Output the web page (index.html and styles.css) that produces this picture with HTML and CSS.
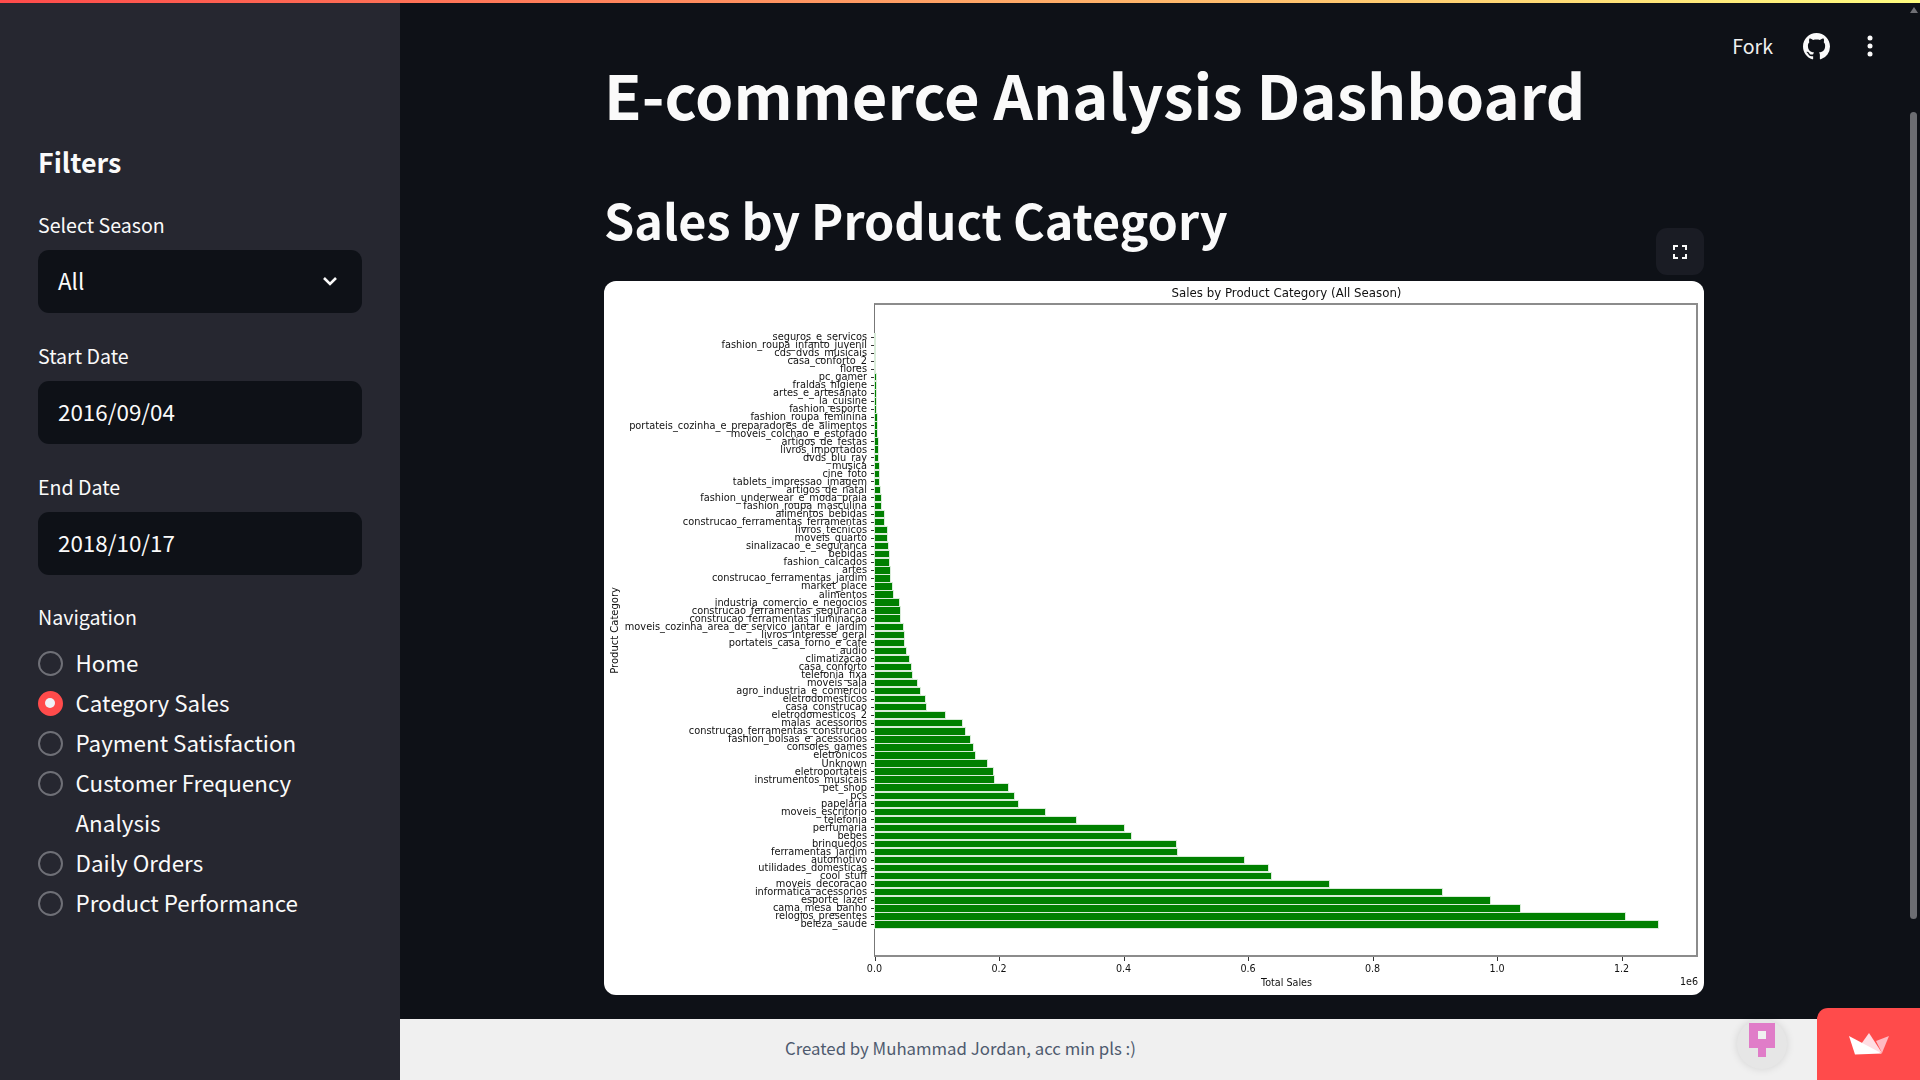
FILE: index.html
```html
<!DOCTYPE html>
<html lang="en">
<head>
<meta charset="utf-8">
<title>E-commerce Analysis Dashboard</title>
<link rel="stylesheet" href="styles.css">
</head>
<body>
<div class="decoration"></div>
<div class="app">
  <aside class="sidebar">
    <h2 class="side-title">Filters</h2>
    <div class="field">
      <div class="field-label">Select Season</div>
      <div class="control"><span>All</span>
        <svg class="chevron" viewBox="0 0 16 10"><path d="M2 2l6 6 6-6" fill="none" stroke="#fafafa" stroke-width="2.6"/></svg>
      </div>
    </div>
    <div class="field">
      <div class="field-label">Start Date</div>
      <div class="control"><span>2016/09/04</span></div>
    </div>
    <div class="field">
      <div class="field-label">End Date</div>
      <div class="control"><span>2018/10/17</span></div>
    </div>
    <div class="field nav-field">
      <div class="field-label">Navigation</div>
      <ul class="radios">
        <li class="radio"><i class="dot"></i><span>Home</span></li>
        <li class="radio on"><i class="dot"></i><span>Category Sales</span></li>
        <li class="radio"><i class="dot"></i><span>Payment Satisfaction</span></li>
        <li class="radio"><i class="dot"></i><span>Customer Frequency<br>Analysis</span></li>
        <li class="radio"><i class="dot"></i><span>Daily Orders</span></li>
        <li class="radio"><i class="dot"></i><span>Product Performance</span></li>
      </ul>
    </div>
  </aside>
  <div class="main">
    <main class="content">
      <h1 class="title">E-commerce Analysis Dashboard</h1>
      <h2 class="subtitle">Sales by Product Category</h2>
      <section class="figure">
        <button class="expand" type="button" aria-label="Fullscreen">
          <svg viewBox="0 0 14 14" width="14" height="14"><path d="M1 5V1h4M9 1h4v4M13 9v4H9M5 13H1V9" fill="none" stroke="#fafafa" stroke-width="2"/></svg>
        </button>
        <div class="plot">
          <div class="fig-title">Sales by Product Category (All Season)</div>
          <div class="fig-body">
            <div class="ylabel">Product Category</div>
            <div class="axes">
              <div class="rows">
                <div class="row"><span class="cat">seguros_e_servicos</span><i class="tick"></i><i class="bar" style="width:.2px"></i></div>
                <div class="row"><span class="cat">fashion_roupa_infanto_juvenil</span><i class="tick"></i><i class="bar" style="width:.2px"></i></div>
                <div class="row"><span class="cat">cds_dvds_musicais</span><i class="tick"></i><i class="bar" style="width:.3px"></i></div>
                <div class="row"><span class="cat">casa_conforto_2</span><i class="tick"></i><i class="bar" style="width:.4px"></i></div>
                <div class="row"><span class="cat">flores</span><i class="tick"></i><i class="bar" style="width:.7px"></i></div>
                <div class="row"><span class="cat">pc_gamer</span><i class="tick"></i><i class="bar" style="width:1px"></i></div>
                <div class="row"><span class="cat">fraldas_higiene</span><i class="tick"></i><i class="bar" style="width:1px"></i></div>
                <div class="row"><span class="cat">artes_e_artesanato</span><i class="tick"></i><i class="bar" style="width:1px"></i></div>
                <div class="row"><span class="cat">la_cuisine</span><i class="tick"></i><i class="bar" style="width:1.3px"></i></div>
                <div class="row"><span class="cat">fashion_esporte</span><i class="tick"></i><i class="bar" style="width:1.7px"></i></div>
                <div class="row"><span class="cat">fashion_roupa_feminina</span><i class="tick"></i><i class="bar" style="width:2px"></i></div>
                <div class="row"><span class="cat">portateis_cozinha_e_preparadores_de_alimentos</span><i class="tick"></i><i class="bar" style="width:2.7px"></i></div>
                <div class="row"><span class="cat">moveis_colchao_e_estofado</span><i class="tick"></i><i class="bar" style="width:2.7px"></i></div>
                <div class="row"><span class="cat">artigos_de_festas</span><i class="tick"></i><i class="bar" style="width:3px"></i></div>
                <div class="row"><span class="cat">livros_importados</span><i class="tick"></i><i class="bar" style="width:3px"></i></div>
                <div class="row"><span class="cat">dvds_blu_ray</span><i class="tick"></i><i class="bar" style="width:3.7px"></i></div>
                <div class="row"><span class="cat">musica</span><i class="tick"></i><i class="bar" style="width:4px"></i></div>
                <div class="row"><span class="cat">cine_foto</span><i class="tick"></i><i class="bar" style="width:4.3px"></i></div>
                <div class="row"><span class="cat">tablets_impressao_imagem</span><i class="tick"></i><i class="bar" style="width:4.7px"></i></div>
                <div class="row"><span class="cat">artigos_de_natal</span><i class="tick"></i><i class="bar" style="width:5.7px"></i></div>
                <div class="row"><span class="cat">fashion_underwear_e_moda_praia</span><i class="tick"></i><i class="bar" style="width:6px"></i></div>
                <div class="row"><span class="cat">fashion_roupa_masculina</span><i class="tick"></i><i class="bar" style="width:6.7px"></i></div>
                <div class="row"><span class="cat">alimentos_bebidas</span><i class="tick"></i><i class="bar" style="width:9.3px"></i></div>
                <div class="row"><span class="cat">construcao_ferramentas_ferramentas</span><i class="tick"></i><i class="bar" style="width:9.7px"></i></div>
                <div class="row"><span class="cat">livros_tecnicos</span><i class="tick"></i><i class="bar" style="width:12px"></i></div>
                <div class="row"><span class="cat">moveis_quarto</span><i class="tick"></i><i class="bar" style="width:12.3px"></i></div>
                <div class="row"><span class="cat">sinalizacao_e_seguranca</span><i class="tick"></i><i class="bar" style="width:13.3px"></i></div>
                <div class="row"><span class="cat">bebidas</span><i class="tick"></i><i class="bar" style="width:14px"></i></div>
                <div class="row"><span class="cat">fashion_calcados</span><i class="tick"></i><i class="bar" style="width:14.7px"></i></div>
                <div class="row"><span class="cat">artes</span><i class="tick"></i><i class="bar" style="width:15px"></i></div>
                <div class="row"><span class="cat">construcao_ferramentas_jardim</span><i class="tick"></i><i class="bar" style="width:15.7px"></i></div>
                <div class="row"><span class="cat">market_place</span><i class="tick"></i><i class="bar" style="width:17.7px"></i></div>
                <div class="row"><span class="cat">alimentos</span><i class="tick"></i><i class="bar" style="width:18.3px"></i></div>
                <div class="row"><span class="cat">industria_comercio_e_negocios</span><i class="tick"></i><i class="bar" style="width:24.7px"></i></div>
                <div class="row"><span class="cat">construcao_ferramentas_seguranca</span><i class="tick"></i><i class="bar" style="width:25px"></i></div>
                <div class="row"><span class="cat">construcao_ferramentas_iluminacao</span><i class="tick"></i><i class="bar" style="width:25.3px"></i></div>
                <div class="row"><span class="cat">moveis_cozinha_area_de_servico_jantar_e_jardim</span><i class="tick"></i><i class="bar" style="width:28.3px"></i></div>
                <div class="row"><span class="cat">livros_interesse_geral</span><i class="tick"></i><i class="bar" style="width:29px"></i></div>
                <div class="row"><span class="cat">portateis_casa_forno_e_cafe</span><i class="tick"></i><i class="bar" style="width:29.3px"></i></div>
                <div class="row"><span class="cat">audio</span><i class="tick"></i><i class="bar" style="width:31.5px"></i></div>
                <div class="row"><span class="cat">climatizacao</span><i class="tick"></i><i class="bar" style="width:34px"></i></div>
                <div class="row"><span class="cat">casa_conforto</span><i class="tick"></i><i class="bar" style="width:36.2px"></i></div>
                <div class="row"><span class="cat">telefonia_fixa</span><i class="tick"></i><i class="bar" style="width:37.3px"></i></div>
                <div class="row"><span class="cat">moveis_sala</span><i class="tick"></i><i class="bar" style="width:42.8px"></i></div>
                <div class="row"><span class="cat">agro_industria_e_comercio</span><i class="tick"></i><i class="bar" style="width:45px"></i></div>
                <div class="row"><span class="cat">eletrodomesticos</span><i class="tick"></i><i class="bar" style="width:50px"></i></div>
                <div class="row"><span class="cat">casa_construcao</span><i class="tick"></i><i class="bar" style="width:51.6px"></i></div>
                <div class="row"><span class="cat">eletrodomesticos_2</span><i class="tick"></i><i class="bar" style="width:70.8px"></i></div>
                <div class="row"><span class="cat">malas_acessorios</span><i class="tick"></i><i class="bar" style="width:87.8px"></i></div>
                <div class="row"><span class="cat">construcao_ferramentas_construcao</span><i class="tick"></i><i class="bar" style="width:90px"></i></div>
                <div class="row"><span class="cat">fashion_bolsas_e_acessorios</span><i class="tick"></i><i class="bar" style="width:95.4px"></i></div>
                <div class="row"><span class="cat">consoles_games</span><i class="tick"></i><i class="bar" style="width:98.2px"></i></div>
                <div class="row"><span class="cat">eletronicos</span><i class="tick"></i><i class="bar" style="width:100.4px"></i></div>
                <div class="row"><span class="cat">Unknown</span><i class="tick"></i><i class="bar" style="width:112.5px"></i></div>
                <div class="row"><span class="cat">eletroportateis</span><i class="tick"></i><i class="bar" style="width:118.5px"></i></div>
                <div class="row"><span class="cat">instrumentos_musicais</span><i class="tick"></i><i class="bar" style="width:119px"></i></div>
                <div class="row"><span class="cat">pet_shop</span><i class="tick"></i><i class="bar" style="width:133.8px"></i></div>
                <div class="row"><span class="cat">pcs</span><i class="tick"></i><i class="bar" style="width:139.3px"></i></div>
                <div class="row"><span class="cat">papelaria</span><i class="tick"></i><i class="bar" style="width:143.7px"></i></div>
                <div class="row"><span class="cat">moveis_escritorio</span><i class="tick"></i><i class="bar" style="width:170.6px"></i></div>
                <div class="row"><span class="cat">telefonia</span><i class="tick"></i><i class="bar" style="width:201.9px"></i></div>
                <div class="row"><span class="cat">perfumaria</span><i class="tick"></i><i class="bar" style="width:249px"></i></div>
                <div class="row"><span class="cat">bebes</span><i class="tick"></i><i class="bar" style="width:256.2px"></i></div>
                <div class="row"><span class="cat">brinquedos</span><i class="tick"></i><i class="bar" style="width:301.1px"></i></div>
                <div class="row"><span class="cat">ferramentas_jardim</span><i class="tick"></i><i class="bar" style="width:302.2px"></i></div>
                <div class="row"><span class="cat">automotivo</span><i class="tick"></i><i class="bar" style="width:369.2px"></i></div>
                <div class="row"><span class="cat">utilidades_domesticas</span><i class="tick"></i><i class="bar" style="width:393.9px"></i></div>
                <div class="row"><span class="cat">cool_stuff</span><i class="tick"></i><i class="bar" style="width:396px"></i></div>
                <div class="row"><span class="cat">moveis_decoracao</span><i class="tick"></i><i class="bar" style="width:454.7px"></i></div>
                <div class="row"><span class="cat">informatica_acessorios</span><i class="tick"></i><i class="bar" style="width:567.7px"></i></div>
                <div class="row"><span class="cat">esporte_lazer</span><i class="tick"></i><i class="bar" style="width:615.5px"></i></div>
                <div class="row"><span class="cat">cama_mesa_banho</span><i class="tick"></i><i class="bar" style="width:645.6px"></i></div>
                <div class="row"><span class="cat">relogios_presentes</span><i class="tick"></i><i class="bar" style="width:750.4px"></i></div>
                <div class="row"><span class="cat">beleza_saude</span><i class="tick"></i><i class="bar" style="width:783.9px"></i></div>
              </div>
            </div>
          </div>
          <div class="xticks">
            <div class="xtick"><span>0.0</span></div>
            <div class="xtick"><span>0.2</span></div>
            <div class="xtick"><span>0.4</span></div>
            <div class="xtick"><span>0.6</span></div>
            <div class="xtick"><span>0.8</span></div>
            <div class="xtick"><span>1.0</span></div>
            <div class="xtick"><span>1.2</span></div>
          </div>
          <div class="xfoot"><span class="xlabel">Total Sales</span><span class="offset">1e6</span></div>
        </div>
      </section>
    </main>
    <footer class="footer">Created by Muhammad Jordan, acc min pls :)</footer>
  </div>
</div>

<div class="toolbar">
  <span class="fork">Fork</span>
  <svg class="github" viewBox="0 0 16 16" width="27" height="27"><path fill="#fafafa" d="M8 0C3.58 0 0 3.58 0 8c0 3.54 2.29 6.53 5.47 7.59.4.07.55-.17.55-.38 0-.19-.01-.82-.01-1.49-2.01.37-2.53-.49-2.69-.94-.09-.23-.48-.94-.82-1.13-.28-.15-.68-.52-.01-.53.63-.01 1.08.58 1.23.82.72 1.21 1.87.87 2.33.66.07-.52.28-.87.51-1.07-1.78-.2-3.64-.89-3.64-3.95 0-.87.31-1.59.82-2.15-.08-.2-.36-1.02.08-2.12 0 0 .67-.21 2.2.82.64-.18 1.32-.27 2-.27.68 0 1.36.09 2 .27 1.53-1.04 2.2-.82 2.2-.82.44 1.1.16 1.92.08 2.12.51.56.82 1.27.82 2.15 0 3.07-1.87 3.75-3.65 3.95.29.25.54.73.54 1.48 0 1.07-.01 1.93-.01 2.2 0 .21.15.46.55.38A8.013 8.013 0 0016 8c0-4.42-3.58-8-8-8z"/></svg>
  <svg class="kebab" viewBox="0 0 6 22" width="6" height="22"><circle cx="3" cy="3" r="2.5" fill="#fafafa"/><circle cx="3" cy="11" r="2.5" fill="#fafafa"/><circle cx="3" cy="19" r="2.5" fill="#fafafa"/></svg>
</div>

<div class="scrollbar"><i class="arrow"></i><i class="thumb"></i></div>

<div class="avatar">
  <svg viewBox="0 0 26 34" width="26" height="34"><path fill="#e07cc8" d="M0 0h26v25h-9v9H9v-9H0z"/><path fill="#f0f0f0" d="M9 8h8v8H9z"/></svg>
</div>

<div class="badge">
  <svg viewBox="0 0 40 22" width="40" height="22">
    <path fill="#ffb9c2" d="M40 3L33 20 27 8z"/>
    <path fill="#ffdde3" d="M20 0L33 20 10 14z"/>
    <path fill="#ffffff" d="M0 3L33 20.5 6 21.5z"/>
  </svg>
</div>
</body>
</html>
```

FILE: styles.css
```css
* { box-sizing: border-box; }
html, body { margin: 0; padding: 0; height: 100%; overflow: hidden; }
body {
  display: flex;
  flex-direction: column;
  background: #0e1117;
  color: #fafafa;
  font-family: "Noto Sans CJK JP", "Noto Sans", sans-serif;
}
.decoration {
  height: 3px;
  flex: none;
  background: linear-gradient(90deg, #ff4b4b, #fffd80);
}
.app { flex: 1; display: flex; min-height: 0; }

/* Sidebar */
.sidebar {
  width: 400px;
  flex: none;
  background: #262730;
  padding: 139px 38px 0;
}
.side-title {
  margin: 0 0 30px;
  font-size: 26.8px;
  line-height: 40px;
  font-weight: 600;
}
.field { margin-bottom: 30px; }
.field-label {
  margin: 0 0 12px;
  font-size: 19.6px;
  line-height: 26px;
}
.control {
  height: 63px;
  border-radius: 11px;
  background: #0e1117;
  display: flex;
  align-items: center;
  justify-content: space-between;
  padding: 0 24px 4px 20px;
  font-size: 22.4px;
}
.chevron { width: 16px; height: 10px; margin-top: 2px; }
.nav-field { margin-top: -1px; }
.radios { list-style: none; margin: 13px 0 0; padding: 0; }
.radio {
  display: flex;
  align-items: flex-start;
  gap: 13px;
  font-size: 22.4px;
  line-height: 40px;
}
.radio span { margin: -1.5px 0 1.5px -.5px; }
.dot {
  flex: none;
  width: 25px;
  height: 25px;
  margin-top: 8px;
  border: 2px solid #6f7077;
  border-radius: 50%;
}
.radio.on .dot {
  background: #ff4b4b;
  border: 7.5px solid #ff4b4b;
}
.radio.on .dot::after {
  content: "";
  display: block;
  width: 10px;
  height: 10px;
  border-radius: 50%;
  background: #f0f2f6;
}

/* Main */
.main { flex: 1; min-width: 0; display: flex; flex-direction: column; }
.content { flex: 1; min-height: 0; padding: 43px 0 0 204px; overflow: hidden; }
.title {
  margin: 0;
  font-size: 61.4px;
  line-height: 96px;
  font-weight: 700;
}
.subtitle {
  margin: 41px 0 26px;
  font-size: 48.5px;
  line-height: 72px;
  font-weight: 600;
}
.figure {
  position: relative;
  width: 1100px;
  height: 714px;
  background: #fff;
  border-radius: 12px;
  color: #111;
  font-family: "DejaVu Sans", sans-serif;
}
.expand {
  position: absolute;
  top: -53px;
  right: 0;
  width: 48px;
  height: 47px;
  padding: 0;
  border: 0;
  border-radius: 11px;
  background: #1a1c24;
  display: flex;
  align-items: center;
  justify-content: center;
}
.plot {
  height: 100%;
  filter: blur(.4px);
}
.fig-title {
  margin-left: 271px;
  width: 823px;
  height: 22px;
  padding-top: 5px;
  text-align: center;
  font-size: 11.8px;
  line-height: 14px;
}
.fig-body { display: flex; height: 654px; }
.ylabel {
  flex: none;
  width: 12px;
  margin: 0 253px 0 5px;
  align-self: center;
  writing-mode: vertical-rl;
  transform: rotate(180deg);
  text-align: center;
  font-size: 10px;
  line-height: 12px;
}
.axes {
  width: 824px;
  flex: none;
  border: 2px solid #8c8c8c;
  border-left: 1px solid #777;
}
.rows { margin: 28px 0 0 -270px; }
.row {
  display: flex;
  align-items: center;
  height: 8.06px;
  font-size: 9.8px;
  line-height: 8px;
}
.cat {
  flex: none;
  width: 266px;
  padding-right: 4px;
  text-align: right;
  white-space: nowrap;
}
.tick { flex: none; width: 3.5px; height: 1px; background: #333; }
.bar { height: 6.4px; background: #008000; outline: .5px solid #d8ecd8; }
.xticks { display: flex; margin-left: 270.5px; height: 20px; }
.xtick {
  flex: none;
  width: 124.53px;
  font-size: 9.6px;
  line-height: 12px;
}
.xtick::before {
  content: "";
  display: block;
  width: 1px;
  height: 4px;
  background: #333;
  margin-bottom: 2px;
}
.xtick span { display: inline-block; transform: translateX(-50%); }
.xfoot {
  position: relative;
  margin-left: 271px;
  width: 823px;
  display: flex;
  justify-content: center;
  font-size: 9.6px;
  line-height: 12px;
}
.offset { position: absolute; right: 0; top: -1px; }

.footer {
  flex: none;
  height: 61px;
  padding: 0 0 0 385px;
  background: #f0f0f0;
  color: #4e5a6e;
  font-size: 16.8px;
  line-height: 58px;
}

/* Overlays */
.toolbar {
  position: absolute;
  top: 29px;
  right: 47px;
  display: flex;
  align-items: center;
  height: 34px;
}
.fork { font-size: 19.6px; line-height: 34px; color: #f0f0f0; margin-right: 30px; }
.github { margin-right: 37px; }
.scrollbar {
  position: absolute;
  top: 3px;
  right: 3px;
  bottom: 161px;
  width: 7px;
  display: flex;
  flex-direction: column;
  align-items: center;
}
.arrow {
  width: 0;
  height: 0;
  margin-top: 4px;
  border: solid transparent;
  border-width: 0 4.5px 6px;
  border-bottom-color: #6f7075;
}
.thumb {
  flex: 1;
  width: 7px;
  margin-top: 99px;
  border-radius: 4px;
  background: #6c6d72;
}
.avatar {
  position: absolute;
  left: 1737px;
  top: 1019px;
  width: 50px;
  height: 50px;
  border-radius: 50%;
  background: #e6e6e6;
  box-shadow: 0 0 8px rgba(0, 0, 0, .12);
  display: flex;
  justify-content: center;
  padding-top: 4px;
}
.badge {
  position: absolute;
  right: 0;
  bottom: 0;
  width: 103px;
  height: 72px;
  background: #ff4b4b;
  border-top-left-radius: 11px;
  display: flex;
  align-items: flex-start;
  justify-content: center;
  padding-top: 25px;
}
```
